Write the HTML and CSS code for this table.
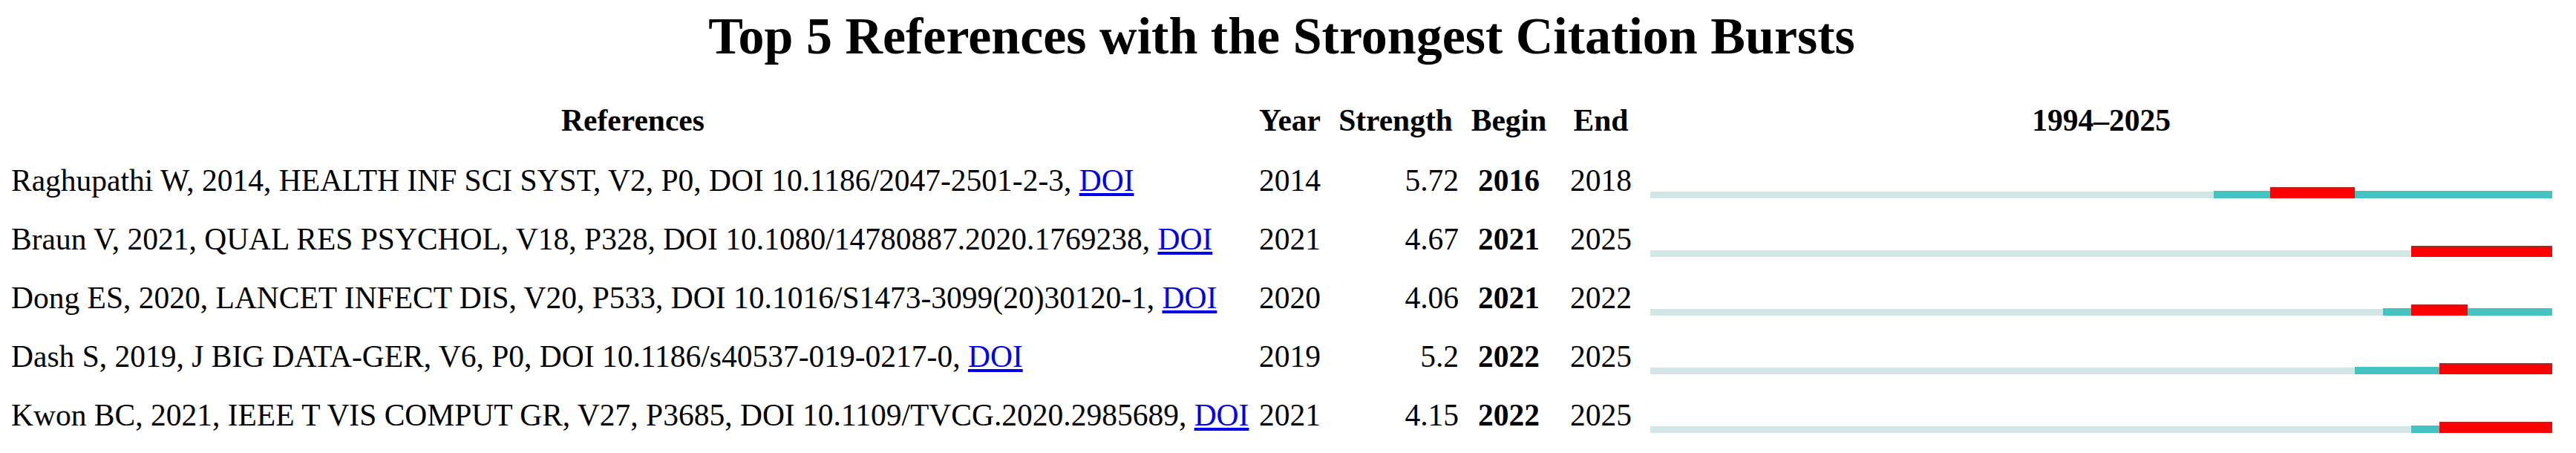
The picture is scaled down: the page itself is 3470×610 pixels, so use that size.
FILE: index.html
```html
<!DOCTYPE html>
<html lang="en">
<head>
  <meta charset="UTF-8">
  <title>Top 5 References with the Strongest Citation Bursts</title>
  <link rel="stylesheet" href="styles.css">
</head>
<body>

  <div class="burst">
    <h1 class="burst-title">Top 5 References with the Strongest Citation Bursts</h1>

    <table class="burst-table">
      <colgroup>
        <col class="col-ref">
        <col class="col-year">
        <col class="col-strength">
        <col class="col-begin">
        <col class="col-end">
        <col class="col-bar">
      </colgroup>
      <thead>
        <tr>
          <th>References</th>
          <th>Year</th>
          <th>Strength</th>
          <th>Begin</th>
          <th>End</th>
          <th>1994&ndash;2025</th>
        </tr>
      </thead>
      <tbody>
        <!-- bar segments: flex-grow = number of years in that part of 1994-2025 -->
        <tr>
          <td class="ref">Raghupathi W, 2014, HEALTH INF SCI SYST, V2, P0, DOI 10.1186/2047-2501-2-3, <a href="#">DOI</a></td>
          <td class="num">2014</td>
          <td class="strength">5.72</td>
          <td class="num"><b>2016</b></td>
          <td class="num">2018</td>
          <td class="bar-cell">
            <div class="track">
              <span class="seg idle" style="flex-grow: 20"></span>
              <span class="seg cited" style="flex-grow: 2"></span>
              <span class="seg burst-on" style="flex-grow: 3"></span>
              <span class="seg cited" style="flex-grow: 7"></span>
            </div>
          </td>
        </tr>
        <tr>
          <td class="ref">Braun V, 2021, QUAL RES PSYCHOL, V18, P328, DOI 10.1080/14780887.2020.1769238, <a href="#">DOI</a></td>
          <td class="num">2021</td>
          <td class="strength">4.67</td>
          <td class="num"><b>2021</b></td>
          <td class="num">2025</td>
          <td class="bar-cell">
            <div class="track">
              <span class="seg idle" style="flex-grow: 27"></span>
              <span class="seg burst-on" style="flex-grow: 5"></span>
            </div>
          </td>
        </tr>
        <tr>
          <td class="ref">Dong ES, 2020, LANCET INFECT DIS, V20, P533, DOI 10.1016/S1473-3099(20)30120-1, <a href="#">DOI</a></td>
          <td class="num">2020</td>
          <td class="strength">4.06</td>
          <td class="num"><b>2021</b></td>
          <td class="num">2022</td>
          <td class="bar-cell">
            <div class="track">
              <span class="seg idle" style="flex-grow: 26"></span>
              <span class="seg cited" style="flex-grow: 1"></span>
              <span class="seg burst-on" style="flex-grow: 2"></span>
              <span class="seg cited" style="flex-grow: 3"></span>
            </div>
          </td>
        </tr>
        <tr>
          <td class="ref">Dash S, 2019, J BIG DATA-GER, V6, P0, DOI 10.1186/s40537-019-0217-0, <a href="#">DOI</a></td>
          <td class="num">2019</td>
          <td class="strength">5.2</td>
          <td class="num"><b>2022</b></td>
          <td class="num">2025</td>
          <td class="bar-cell">
            <div class="track">
              <span class="seg idle" style="flex-grow: 25"></span>
              <span class="seg cited" style="flex-grow: 3"></span>
              <span class="seg burst-on" style="flex-grow: 4"></span>
            </div>
          </td>
        </tr>
        <tr>
          <td class="ref">Kwon BC, 2021, IEEE T VIS COMPUT GR, V27, P3685, DOI 10.1109/TVCG.2020.2985689, <a href="#">DOI</a></td>
          <td class="num">2021</td>
          <td class="strength">4.15</td>
          <td class="num"><b>2022</b></td>
          <td class="num">2025</td>
          <td class="bar-cell">
            <div class="track">
              <span class="seg idle" style="flex-grow: 27"></span>
              <span class="seg cited" style="flex-grow: 1"></span>
              <span class="seg burst-on" style="flex-grow: 4"></span>
            </div>
          </td>
        </tr>
      </tbody>
    </table>
  </div>

</body>
</html>
```

FILE: styles.css
```css
body {
  margin: 0;
  padding: 0;
  background-color: #fff;
  color: #000;
  font-family: "Liberation Serif", "Times New Roman", serif;
}

.burst {
  width: 3423px;
  margin-left: 15px;
}

.burst-title {
  margin: 9px 0 0;
  font-size: 70px;
  line-height: 80px;
  font-weight: bold;
  text-align: center;
}

/* Table */
.burst-table {
  width: 3423px;
  margin-top: 34px;
  border-collapse: collapse;
  table-layout: fixed;
  font-size: 41.5px;
  line-height: 79px;
}

.col-ref { width: 1675px; }
.col-year { width: 95px; }
.col-strength { width: 190px; }
.col-begin { width: 115px; }
.col-end { width: 133px; }
.col-bar { width: 1215px; }

.burst-table th,
.burst-table td {
  padding: 0;
  vertical-align: top;
  white-space: nowrap;
}

.burst-table th {
  font-weight: bold;
  text-align: center;
}

.burst-table thead tr {
  height: 81px;
}

.burst-table tbody tr {
  height: 79px;
}

.ref {
  text-align: left;
}

.ref a {
  color: #0000ee;
  text-decoration: underline;
}

.num {
  text-align: center;
}

.burst-table td.strength {
  text-align: right;
  padding-right: 10px;
}

/* Burst bars */
.track {
  display: flex;
  align-items: flex-end;
  height: 63px;
}

.seg {
  flex-basis: 0;
}

.seg.idle {
  height: 9px;
  background-color: #d2e7e5;
}

.seg.cited {
  height: 10px;
  background-color: #44c3c0;
}

.seg.burst-on {
  height: 13px;
  background-color: #ff0000;
  border-top: 2px solid #b42323;
}
```
